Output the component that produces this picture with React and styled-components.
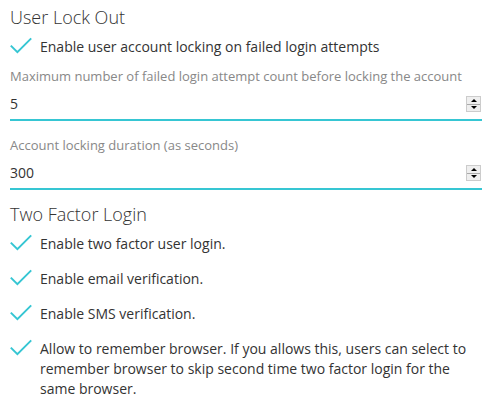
import React from "react";
import styled, { createGlobalStyle } from "styled-components";

const Global = createGlobalStyle`
  html, body { margin: 0; padding: 0; background: #fff; }
  body { font-family: "Open Sans", "Noto Sans", sans-serif; color: #333; }
`;

const Page = styled.div`
  width: 490px;
  padding: 5px 8px 0 10px;
  box-sizing: border-box;
`;

const Heading = styled.h3`
  margin: ${(p) => p.$mt || 0}px 0 0 0;
  font-size: 18px;
  font-weight: 300;
  line-height: 24px;
  color: #333;
`;

const CheckRow = styled.div`
  display: flex;
  align-items: flex-start;
  gap: 8px;
  margin-top: ${(p) => p.$mt}px;
`;

const CheckMark = styled.svg`
  flex: none;
  width: 22px;
  height: 20px;
`;

const CheckText = styled.div`
  font-size: 14px;
  line-height: 20px;
  color: #333;
`;

const Field = styled.div`
  margin-top: ${(p) => p.$mt}px;
`;

const Label = styled.div`
  font-size: 13px;
  line-height: 18px;
  color: #888;
`;

const InputRow = styled.div`
  display: flex;
  align-items: flex-start;
  justify-content: space-between;
  height: 36px;
  box-sizing: border-box;
  padding: 9px 1px 0 0;
  border-bottom: 2px solid #36c6d3;
`;

const Value = styled.span`
  font-size: 14px;
  line-height: 20px;
  color: #333;
`;

const Spinner = styled.div`
  margin-top: 2px;
  width: 15px;
  height: 16px;
  box-sizing: border-box;
  background: #efefef;
  border: 1px solid #ccc;
  display: flex;
  flex-direction: column;
`;

const SpinHalf = styled.div`
  flex: 1;
  display: flex;
  align-items: center;
  justify-content: center;
  border-top: ${(p) => (p.$bottom ? "1px solid #aaa" : "none")};
`;

const Tri = styled.div`
  width: 0;
  height: 0;
  border-left: 3px solid transparent;
  border-right: 3px solid transparent;
  ${(p) => (p.$down ? "border-top: 3px solid #000;" : "border-bottom: 3px solid #000;")}
`;

const Check = () => (
  <CheckMark viewBox="0 0 22 20">
    <path d="M0.8 8.6 L7.4 15.2 L21.2 1.4" fill="none" stroke="#36c6d3" strokeWidth="2" />
  </CheckMark>
);

const NumInput = ({ value }) => (
  <InputRow>
    <Value>{value}</Value>
    <Spinner>
      <SpinHalf><Tri /></SpinHalf>
      <SpinHalf $bottom><Tri $down /></SpinHalf>
    </Spinner>
  </InputRow>
);

const Item = ({ mt, children }) => (
  <CheckRow $mt={mt}>
    <Check />
    <CheckText>{children}</CheckText>
  </CheckRow>
);

export default function App() {
  return (
    <>
      <Global />
      <Page>
        <Heading>User Lock Out</Heading>
        <Item mt={8}>Enable user account locking on failed login attempts</Item>
        <Field $mt={10}>
          <Label>Maximum number of failed login attempt count before locking the account</Label>
          <NumInput value="5" />
        </Field>
        <Field $mt={15}>
          <Label>Account locking duration (as seconds)</Label>
          <NumInput value="300" />
        </Field>
        <Heading $mt={12}>Two Factor Login</Heading>
        <Item mt={8}>Enable two factor user login.</Item>
        <Item mt={15}>Enable email verification.</Item>
        <Item mt={15}>Enable SMS verification.</Item>
        <Item mt={15}>
          Allow to remember browser. If you allows this, users can select to remember browser to skip second time two factor login for the same browser.
        </Item>
      </Page>
    </>
  );
}
